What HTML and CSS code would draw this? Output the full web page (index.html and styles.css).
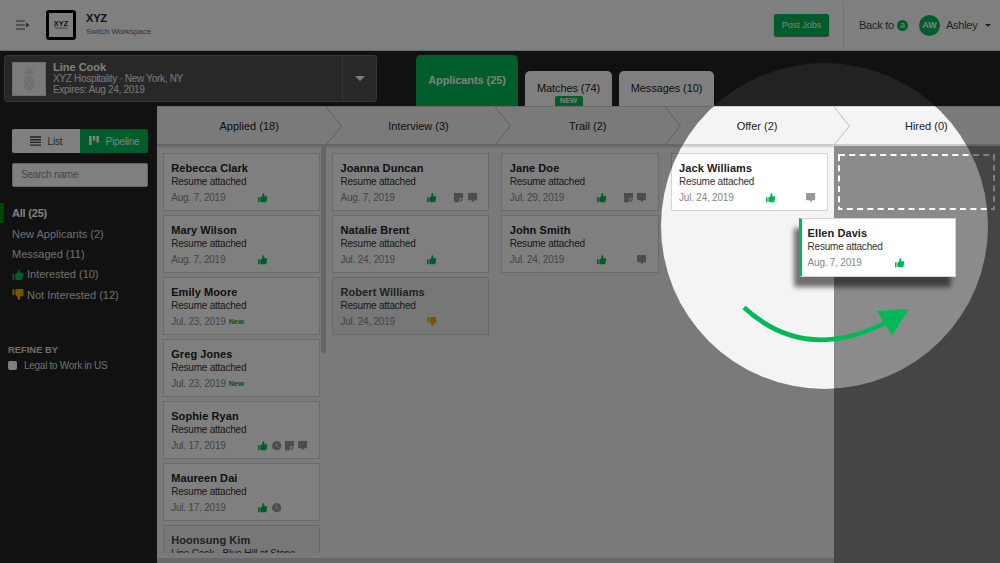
FILE: index.html
```html
<!DOCTYPE html>
<html lang="en">
<head>
    <meta charset="UTF-8">
    <title>Applicants</title>
    <link rel="stylesheet" href="styles.css">
</head>
<body>
<svg class="sprite">
    <symbol id="up" viewBox="0 0 18 18">
        <path d="M0 8h3v10H0z"/>
        <path d="M4.500 8.500 8 6.500 9 0.800Q9.500 0 10.500 0.300 13 1.500 11.800 6H16Q18 6.200 17.800 8.200L16.300 16Q15.800 18 14 18H7L4.500 16.500z"/>
    </symbol>
    <symbol id="down" viewBox="0 0 18 18">
        <path d="M0 0h3v10H0z"/>
        <path d="M4.500 1.500 7 0H16Q18 0 18 2V10Q18 12 16 12H12.500V16.500Q12 18 10.500 18 9 18 8.500 16.500L8 12.500 4.500 9.500z"/>
    </symbol>
    <symbol id="clock" viewBox="0 0 18 18">
        <circle cx="9" cy="9" r="9"/>
        <path d="M8.500 4v5.500l4 3" fill="none" stroke="#fff" stroke-width="1.600"/>
    </symbol>
    <symbol id="note" viewBox="0 0 18 18">
        <path d="M0 0h18v10h-8v8H0z"/>
        <path d="M12 12h6l-6 6z"/>
    </symbol>
    <symbol id="chat" viewBox="0 0 18 18">
        <path d="M2 0h14q2 0 2 2v10q0 2-2 2h-4l-2.500 4L7 14H2q-2 0-2-2V2Q0 0 2 0z"/>
    </symbol>
</svg>

<div class="header">
    <svg class="toggle" viewBox="0 0 14 10">
        <path d="M0 1h9M0 5h9M0 9h9" stroke="#555" stroke-width="1.200"/>
        <path d="M10 2.500v5L13.500 5z" fill="#555"/>
    </svg>
    <div class="logo"><b>XYZ</b><small>Hospitality</small></div>
    <div class="workspace">
        <b>XYZ</b>
        <span>Switch Workspace</span>
    </div>
    <a class="post-jobs">Post Jobs</a>
    <div class="account">
        <span class="back">Back to</span>
        <span class="brand">a</span>
        <span class="avatar">AW</span>
        <span class="user">Ashley</span>
        <i class="caret"></i>
    </div>
</div>

<div class="topbar">
    <div class="job">
        <div class="job-pic">
            <svg viewBox="0 0 20 32">
                <path d="M10 12 3 8l5 1-3-6 4 4 1-6 2 6 4-4-3 6 5-1z"/>
                <ellipse cx="10" cy="21" rx="6" ry="9"/>
                <path d="m5 16 9 11M4 21l7 8M8 13l8 9M15 16 6 27M16 21l-7 8M12 13l-8 9" fill="none" stroke="#f7f7f7" stroke-width=".6"/>
            </svg>
        </div>
        <div class="job-text">
            <b>Line Cook</b>
            <span>XYZ Hospitality · New York, NY</span>
            <span>Expires: Aug 24, 2019</span>
        </div>
        <div class="job-more"><i></i></div>
    </div>
    <div class="tabs">
        <div class="tab active">Applicants (25)</div>
        <div class="tab matches"><span>Matches (74)</span><em>NEW</em></div>
        <div class="tab messages">Messages (10)</div>
    </div>
</div>

<div class="main">
    <div class="sidebar">
        <div class="switch">
            <a>
                <svg class="list-icon" viewBox="0 0 11 10"><path d="M0 1h11M0 3.700h11M0 6.400h11M0 9.100h11" stroke="#444" stroke-width="1.400"/></svg>
                List
            </a>
            <a class="on">
                <svg class="pipe-icon" viewBox="0 0 10 10"><path d="M0 0h2.600v9H0zM3.700 0h2.600v4.500H3.700zM7.400 0H10v6.500H7.400z" fill="#fff"/></svg>
                Pipeline
            </a>
        </div>
        <div class="search">Search name</div>
        <ul class="filters">
            <li class="current">All (25)</li>
            <li>New Applicants (2)</li>
            <li>Messaged (11)</li>
            <li><svg class="up"><use href="#up"/></svg>Interested (10)</li>
            <li><svg class="down"><use href="#down"/></svg>Not Interested (12)</li>
        </ul>
        <div class="refine">REFINE BY</div>
        <div class="check"><i></i>Legal to Work in US</div>
    </div>

    <div class="board">
        <div class="stages">
            <div class="stage">Applied (18)<svg viewBox="0 0 16 38"><path d="M0 0 15.500 19 0 38"/></svg></div>
            <div class="stage">Interview (3)<svg viewBox="0 0 16 38"><path d="M0 0 15.500 19 0 38"/></svg></div>
            <div class="stage">Trail (2)<svg viewBox="0 0 16 38"><path d="M0 0 15.500 19 0 38"/></svg></div>
            <div class="stage">Offer (2)<svg viewBox="0 0 16 38"><path d="M0 0 15.500 19 0 38"/></svg></div>
            <div class="stage">Hired (0)</div>
        </div>
        <div class="columns">
            <div class="column first">
                <div class="card">
                    <b>Rebecca Clark</b><p>Resume attached</p>
                    <div class="meta"><span>Aug. 7, 2019</span><div class="icons"><svg class="up"><use href="#up"/></svg></div></div>
                </div>
                <div class="card">
                    <b>Mary Wilson</b><p>Resume attached</p>
                    <div class="meta"><span>Aug. 7, 2019</span><div class="icons"><svg class="up"><use href="#up"/></svg></div></div>
                </div>
                <div class="card">
                    <b>Emily Moore</b><p>Resume attached</p>
                    <div class="meta"><span>Jul. 23, 2019</span><em>New</em></div>
                </div>
                <div class="card">
                    <b>Greg Jones</b><p>Resume attached</p>
                    <div class="meta"><span>Jul. 23, 2019</span><em>New</em></div>
                </div>
                <div class="card">
                    <b>Sophie Ryan</b><p>Resume attached</p>
                    <div class="meta"><span>Jul. 17, 2019</span><div class="icons"><svg class="up"><use href="#up"/></svg><svg><use href="#clock"/></svg><svg><use href="#note"/></svg><svg><use href="#chat"/></svg></div></div>
                </div>
                <div class="card">
                    <b>Maureen Dai</b><p>Resume attached</p>
                    <div class="meta"><span>Jul. 17, 2019</span><div class="icons"><svg class="up"><use href="#up"/></svg><svg><use href="#clock"/></svg></div></div>
                </div>
                <div class="card muted">
                    <b>Hoonsung Kim</b><p>Line Cook · Blue Hill at Stone</p>
                </div>
                <div class="scroll"></div>
            </div>
            <div class="column">
                <div class="card">
                    <b>Joanna Duncan</b><p>Resume attached</p>
                    <div class="meta"><span>Aug. 7, 2019</span><div class="icons"><svg class="up"><use href="#up"/></svg><svg></svg><svg><use href="#note"/></svg><svg><use href="#chat"/></svg></div></div>
                </div>
                <div class="card">
                    <b>Natalie Brent</b><p>Resume attached</p>
                    <div class="meta"><span>Jul. 24, 2019</span><div class="icons"><svg class="up"><use href="#up"/></svg></div></div>
                </div>
                <div class="card muted">
                    <b>Robert Williams</b><p>Resume attached</p>
                    <div class="meta"><span>Jul. 24, 2019</span><div class="icons"><svg class="down"><use href="#down"/></svg></div></div>
                </div>
            </div>
            <div class="column">
                <div class="card">
                    <b>Jane Doe</b><p>Resume attached</p>
                    <div class="meta"><span>Jul. 29, 2019</span><div class="icons"><svg class="up"><use href="#up"/></svg><svg></svg><svg><use href="#note"/></svg><svg><use href="#chat"/></svg></div></div>
                </div>
                <div class="card">
                    <b>John Smith</b><p>Resume attached</p>
                    <div class="meta"><span>Jul. 24, 2019</span><div class="icons"><svg class="up"><use href="#up"/></svg><svg></svg><svg></svg><svg><use href="#chat"/></svg></div></div>
                </div>
            </div>
            <div class="column">
                <div class="card">
                    <b>Jack Williams</b><p>Resume attached</p>
                    <div class="meta"><span>Jul. 24, 2019</span><div class="icons"><svg class="up"><use href="#up"/></svg><svg></svg><svg></svg><svg><use href="#chat"/></svg></div></div>
                </div>
            </div>
            <div class="column hired">
                <svg class="drop" viewBox="0 0 157 56"><rect x="1" y="1" width="155" height="54"/></svg>
            </div>
        </div>
        <div class="hscroll"></div>
    </div>
</div>

<div class="spotlight"></div>

<!-- dragged card -->
<div class="card drag">
    <b>Ellen Davis</b><p>Resume attached</p>
    <div class="meta"><span>Aug. 7, 2019</span><div class="icons"><svg class="up"><use href="#up"/></svg></div></div>
</div>
<svg class="arrow" viewBox="0 0 180 50">
    <path d="M5 7.500C46 45 94 50 149 21.500" fill="none" stroke="#00b956" stroke-width="4.700"/>
    <path d="M138 11 170 9 153 35.500z" fill="#00b956"/>
</svg>
</body>
</html>
```
FILE: styles.css
```css
*{
    margin: 0;
    padding: 0;
    box-sizing: border-box;
}
body{
    width: 1000px;
    height: 563px;
    overflow: hidden;
    position: relative;
    background: #222;
    color: #222;
    font-family: "Liberation Sans", Arial, sans-serif;
    font-size: 11px;
}
li{
    list-style: none;
}
i, em{
    font-style: normal;
}
.sprite{
    display: none;
}
.up{
    fill: #00b956;
}
.down{
    fill: #f5a800;
}

/* header */
.header{
    height: 51px;
    display: flex;
    align-items: center;
    background: #fff;
    border-bottom: 1px solid #d4d4d4;
}
.toggle{
    width: 14px;
    height: 10px;
    margin-left: 16px;
}
.logo{
    width: 30px;
    height: 30px;
    margin-left: 16px;
    border: 3px solid #000;
    border-radius: 3px;
    display: flex;
    flex-direction: column;
    align-items: center;
    justify-content: center;
}
.logo b{
    font-size: 7.4px;
    line-height: 7px;
}
.logo small{
    font-size: 2.8px;
    line-height: 3px;
    color: #555;
}
.workspace{
    margin-left: 10px;
    padding-bottom: 1px;
}
.workspace b,
.workspace span{
    display: block;
}
.workspace b{
    font-size: 11px;
    line-height: 14px;
    letter-spacing: -0.2px;
}
.workspace span{
    font-size: 8px;
    line-height: 13px;
    letter-spacing: -0.05px;
    color: #666;
}
.post-jobs{
    width: 55px;
    height: 22px;
    margin-left: auto;
    border-radius: 2px;
    background: #00b956;
    box-shadow: 0 1px 1px #777;
    color: #fff;
    font-size: 9px;
    line-height: 22px;
    text-align: center;
}
.account{
    width: 157px;
    height: 47px;
    margin-left: 14px;
    padding-left: 15px;
    border-left: 1px solid #e2e2e2;
    display: flex;
    align-items: center;
    color: #444;
}
.back, .user{
    font-size: 11px;
    letter-spacing: -0.25px;
}
.brand{
    width: 11px;
    height: 11px;
    margin-left: 3px;
    border-radius: 50%;
    background: #00b956;
    color: #fff;
    font-size: 9px;
    line-height: 10px;
    text-align: center;
}
.avatar{
    width: 21px;
    height: 21px;
    margin: 0 6px 0 11px;
    border-radius: 50%;
    background: #00b956;
    color: #fff;
    font-size: 9px;
    font-weight: bold;
    line-height: 21px;
    text-align: center;
}
.caret{
    margin-left: 8px;
    border: 3px solid transparent;
    border-top-color: #444;
    border-bottom: 0;
}

/* job select and tabs */
.topbar{
    height: 55px;
    padding-left: 4px;
    display: flex;
}
.job{
    width: 373px;
    height: 47px;
    margin-top: 4px;
    border: 1px solid #6c6c6c;
    border-radius: 3px;
    background: #505050;
    color: #fff;
    display: flex;
    align-items: center;
}
.job-pic{
    width: 34px;
    height: 34px;
    margin-left: 7px;
    background: #f7f7f7;
    border: 1px solid #ddd;
    display: flex;
    justify-content: center;
    align-items: center;
}
.job-pic svg{
    width: 18px;
    height: 29px;
    fill: #dedede;
}
.job-text{
    flex: 1;
    margin-left: 7px;
    padding-bottom: 1px;
}
.job-text b,
.job-text span{
    display: block;
    line-height: 11px;
}
.job-text b{
    font-size: 11px;
    color: #fff;
}
.job-text span{
    font-size: 10px;
    letter-spacing: -0.3px;
    color: #eee;
}
.job-more{
    width: 34px;
    height: 45px;
    border-left: 1px solid #6c6c6c;
    display: flex;
    align-items: center;
    justify-content: center;
}
.job-more i{
    border: 5px solid transparent;
    border-top-color: #fff;
    border-bottom: 0;
}
.tabs{
    margin-left: 39px;
    display: flex;
    align-items: flex-end;
    gap: 7px;
}
.tab{
    height: 35px;
    background: #fff;
    border-radius: 5px 5px 0 0;
    line-height: 35px;
    letter-spacing: -0.08px;
    text-align: center;
}
.tab.active{
    width: 102px;
    height: 51px;
    background: #00b956;
    color: #fff;
    font-weight: bold;
    line-height: 51px;
}
.matches{
    width: 87px;
    display: flex;
    flex-direction: column;
    align-items: center;
}
.matches span{
    line-height: 15px;
    padding-top: 10px;
}
.matches em{
    width: 28px;
    height: 10px;
    border-radius: 2px 2px 0 0;
    background: #00b956;
    color: #fff;
    font-size: 7.5px;
    font-weight: bold;
    line-height: 10px;
}
.messages{
    width: 95px;
}

/* sidebar */
.main{
    height: 457px;
    display: flex;
}
.sidebar{
    width: 157px;
    padding-top: 23px;
    color: #fff;
}
.switch{
    width: 136px;
    height: 24px;
    margin-left: 12px;
    border-radius: 2px;
    overflow: hidden;
    display: flex;
    font-size: 10px;
    letter-spacing: -0.2px;
}
.switch a{
    flex: 1;
    display: flex;
    align-items: center;
    justify-content: center;
    gap: 7px;
    background: #fff;
    color: #555;
}
.switch .on{
    background: #00b956;
    color: #fff;
}
.list-icon{
    width: 11px;
    height: 10px;
}
.pipe-icon{
    width: 10px;
    height: 10px;
}
.search{
    width: 136px;
    height: 24px;
    margin: 10px 0 0 12px;
    padding-left: 8px;
    border: 1px solid #ccc;
    border-radius: 2px;
    background: #fff;
    color: #8a8a8a;
    font-size: 10px;
    letter-spacing: -0.2px;
    line-height: 22px;
}
.filters{
    margin-top: 16px;
}
.filters li{
    height: 20.4px;
    padding-left: 12px;
    display: flex;
    align-items: center;
    color: #ddd;
}
.filters .current{
    padding-left: 8px;
    border-left: 4px solid #008a00;
    color: #fff;
    font-weight: bold;
    letter-spacing: -0.2px;
}
.filters svg{
    width: 12px;
    height: 11px;
    margin-right: 3px;
}
.refine{
    margin: 39px 0 0 8px;
    font-size: 9.4px;
    font-weight: bold;
    line-height: 12px;
    color: #ddd;
}
.check{
    margin: 3px 0 0 8px;
    display: flex;
    align-items: center;
    color: #ddd;
    font-size: 10px;
    letter-spacing: -0.28px;
    line-height: 13px;
}
.check i{
    width: 9px;
    height: 9px;
    margin-right: 7px;
    border-radius: 2px;
    background: #fff;
}

/* board */
.board{
    width: 843px;
    background: #f4f4f4;
    overflow: hidden;
    display: flex;
    flex-direction: column;
}
.stages{
    flex: none;
    width: 847px;
    height: 40px;
    border-top: 1px solid #d0d0d0;
    border-bottom: 2px solid #ccc;
    display: grid;
    grid-template-columns: repeat(5, 169.3px);
    box-shadow: 0 1px 2px #ccc;
}
.stage{
    padding-left: 15px;
    position: relative;
    line-height: 38px;
    text-align: center;
}
.stage svg{
    width: 16px;
    height: 38px;
    position: absolute;
    left: 169px;
    top: 0;
    fill: none;
    stroke: #bbb;
}
.columns{
    flex: 1;
    min-height: 0;
    width: 847px;
    display: grid;
    grid-template-columns: repeat(5, 169.3px);
}
.column{
    padding: 7px 6.2px 0 5.8px;
    min-height: 0;
}
.first{
    height: 407px;
    overflow: hidden;
    position: relative;
}
.card{
    width: 157.3px;
    height: 58px;
    margin-bottom: 4px;
    padding: 7px 0 0 7.4px;
    border: 1px solid #d5d5d5;
    background: #fff;
}
.card b{
    display: block;
    font-size: 11px;
    line-height: 14px;
    letter-spacing: 0.08px;
}
.card p{
    font-size: 10px;
    line-height: 13px;
    letter-spacing: -0.22px;
    color: #333;
    white-space: nowrap;
}
.meta{
    height: 18px;
    display: flex;
    align-items: center;
    color: #888;
    font-size: 10px;
    letter-spacing: -0.22px;
}
.meta span{
    width: 57.5px;
    white-space: nowrap;
}
.meta em{
    color: #00a04a;
    font-size: 7.4px;
    font-weight: bold;
    letter-spacing: 0;
}
.icons{
    margin-left: 29.5px;
    padding-top: 2px;
    display: flex;
    gap: 4px;
    fill: #999;
}
.icons svg{
    width: 9.4px;
    height: 9.4px;
}
.icons .up{
    fill: #00b956;
}
.icons .down{
    fill: #f5a800;
}
.muted{
    background: #eee;
}
.muted b{
    color: #444;
}
.scroll{
    width: 5px;
    height: 207px;
    position: absolute;
    right: 0.4px;
    top: 0;
    border-radius: 0 0 2px 2px;
    background: #ccc;
}
.hired{
    height: 417px;
    padding: 8px 0 0 3.8px;
    background: #8b8b8b;
}
.drop{
    width: 157px;
    height: 56px;
}
.drop rect{
    fill: none;
    stroke: #fff;
    stroke-width: 2;
    stroke-dasharray: 6 4.3;
}
.hscroll{
    flex: none;
    width: 677px;
    height: 5px;
    background: #d0d0d0;
}

/* dims everything outside the circle */
.spotlight{
    width: 327px;
    height: 326px;
    position: absolute;
    left: 661px;
    top: 63px;
    border-radius: 50%;
    box-shadow: 0 0 0 1000px rgba(0, 0, 0, .5);
}
.drag{
    height: 59px;
    margin: 0;
    position: absolute;
    left: 799px;
    top: 218px;
    border-left: 3px solid #00b956;
    padding-left: 5.6px;
    box-shadow: -5px 10px 5px rgba(0, 0, 0, .55);
}
.arrow{
    width: 180px;
    height: 50px;
    position: absolute;
    left: 739px;
    top: 300px;
}
```
